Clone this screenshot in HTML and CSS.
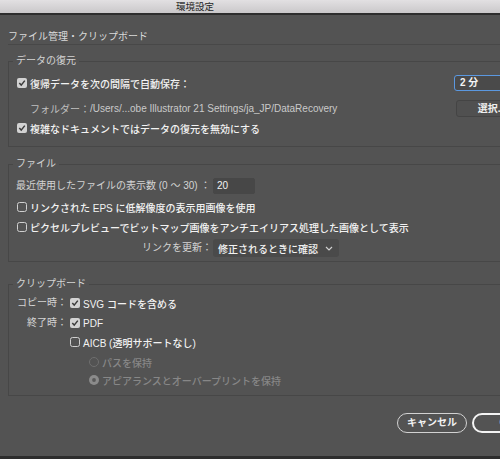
FILE: index.html
```html
<!DOCTYPE html>
<html lang="ja">
<head>
<meta charset="utf-8">
<title>環境設定</title>
<link rel="stylesheet" href="styles.css">
</head>
<body>
<div class="window">
  <div class="titlebar"><span class="title">環境設定</span></div>
  <div class="content">
    <div class="heading">ファイル管理・クリップボード</div>

    <fieldset class="group g1">
      <legend>データの復元</legend>
      <div class="row r1">
        <span class="cb on"><svg viewBox="0 0 10 10"><rect x="0" y="0" width="10" height="10" rx="2" fill="#d2d2d2"/><path d="M2.3 5.1 L4.2 7.1 L7.8 2.6" fill="none" stroke="#3b3b3b" stroke-width="1.5"/></svg></span>
        <span class="lbl">復帰データを次の間隔で自動保存：</span>
        <span class="select focus">2 分</span>
      </div>
      <div class="row r2">
        <span class="folder">フォルダー：</span><span class="path">/Users/...obe Illustrator 21 Settings/ja_JP/DataRecovery</span>
        <span class="btn-choose">選択...</span>
      </div>
      <div class="row r3">
        <span class="cb on"><svg viewBox="0 0 10 10"><rect x="0" y="0" width="10" height="10" rx="2" fill="#d2d2d2"/><path d="M2.3 5.1 L4.2 7.1 L7.8 2.6" fill="none" stroke="#3b3b3b" stroke-width="1.5"/></svg></span>
        <span class="lbl">複雑なドキュメントではデータの復元を無効にする</span>
      </div>
    </fieldset>

    <fieldset class="group g2">
      <legend>ファイル</legend>
      <div class="form2">
        <span class="plain count">最近使用したファイルの表示数 (0 ～ 30) ：</span>
        <span class="input">20</span>
        <div class="row span cb3">
          <span class="cb"><svg viewBox="0 0 10 10"><rect x="0.5" y="0.5" width="9" height="9" rx="2" fill="none" stroke="#cfcfcf"/></svg></span>
          <span class="lbl">リンクされた EPS に低解像度の表示用画像を使用</span>
        </div>
        <div class="row span cb4">
          <span class="cb"><svg viewBox="0 0 10 10"><rect x="0.5" y="0.5" width="9" height="9" rx="2" fill="none" stroke="#cfcfcf"/></svg></span>
          <span class="lbl">ピクセルプレビューでビットマップ画像をアンチエイリアス処理した画像として表示</span>
        </div>
        <span class="plain right link">リンクを更新：</span>
        <span class="dropdown link">修正されるときに確認<svg class="chev" viewBox="0 0 8 5"><path d="M1 1 L4 4 L7 1" fill="none" stroke="#d0d0d0" stroke-width="1.2"/></svg></span>
      </div>
    </fieldset>

    <fieldset class="group g3">
      <legend>クリップボード</legend>
      <div class="form3">
        <span class="plain right c1">コピー時：</span>
        <div class="row c1">
          <span class="cb on"><svg viewBox="0 0 10 10"><rect x="0" y="0" width="10" height="10" rx="2" fill="#d2d2d2"/><path d="M2.3 5.1 L4.2 7.1 L7.8 2.6" fill="none" stroke="#3b3b3b" stroke-width="1.5"/></svg></span>
          <span class="lbl">SVG コードを含める</span>
        </div>
        <span class="plain right c2">終了時：</span>
        <div class="row c2">
          <span class="cb on"><svg viewBox="0 0 10 10"><rect x="0" y="0" width="10" height="10" rx="2" fill="#d2d2d2"/><path d="M2.3 5.1 L4.2 7.1 L7.8 2.6" fill="none" stroke="#3b3b3b" stroke-width="1.5"/></svg></span>
          <span class="lbl">PDF</span>
        </div>
        <div class="row c3 col2">
          <span class="cb"><svg viewBox="0 0 10 10"><rect x="0.5" y="0.5" width="9" height="9" rx="2" fill="none" stroke="#cfcfcf"/></svg></span>
          <span class="lbl">AICB (透明サポートなし)</span>
        </div>
        <div class="row c4 col2 radio">
          <span class="rd"><svg viewBox="0 0 10 10"><circle cx="5" cy="5" r="4.5" fill="none" stroke="#6f6f6f"/></svg></span>
          <span class="dis">パスを保持</span>
        </div>
        <div class="row c5 col2 radio">
          <span class="rd"><svg viewBox="0 0 10 10"><circle cx="5" cy="5" r="5" fill="#8b8b8b"/><circle cx="5" cy="5" r="1.9" fill="#595959"/></svg></span>
          <span class="dis">アピアランスとオーバープリントを保持</span>
        </div>
      </div>
    </fieldset>

    <div class="buttons">
      <span class="btn cancel">キャンセル</span>
      <span class="btn ok">OK</span>
    </div>
  </div>
</div>
</body>
</html>
```

FILE: styles.css
```css
html, body {
  margin: 0;
  padding: 0;
  overflow: hidden;
  background: #535353;
}

body {
  width: 500px;
  height: 459px;
}

.window {
  width: 560px;
  height: 459px;
  box-sizing: border-box;
  border-bottom: 3px solid #2d2d2d;
  background: #535353;
  font-family: "Liberation Sans", "Noto Sans CJK JP", sans-serif;
  font-size: 10px;
  color: #d6d6d6;
}

.titlebar {
  height: 13px;
  border-bottom: 2px solid #2e2e2e;
  background: linear-gradient(#e2e0e2, #cac8ca);
  padding-left: 176px;
  line-height: 13px;
}

.title {
  font-size: 9.5px;
  color: #262626;
}

.content {
  padding: 15px 0 0 8px;
}

.heading {
  line-height: 14px;
  border-bottom: 1px solid #484848;
  color: #dadada;
}

.group {
  margin: 9px 0 0 0;
  padding: 0 8px 9px 8px;
  border: 1px solid #474747;
  min-width: 0;
}

.group legend {
  padding: 0 3px;
  margin-left: -4px;
  line-height: 14px;
  color: #d4d4d4;
}

.g2 {
  margin-top: 10px;
  padding-bottom: 4px;
}

.g3 {
  margin-top: 15px;
  padding-bottom: 6px;
}

.row {
  display: flex;
  align-items: center;
  height: 18px;
}

.cb, .rd {
  display: flex;
  width: 10px;
  height: 10px;
  margin-right: 3px;
  flex: none;
}

.cb svg, .rd svg {
  width: 10px;
  height: 10px;
}

.lbl {
  color: #f2f2f2;
  font-weight: 500;
  white-space: nowrap;
}

.plain {
  color: #d4d4d4;
  white-space: nowrap;
  line-height: 18px;
}

.dis {
  color: #878787;
  font-weight: 500;
  white-space: nowrap;
}

/* group 1 */
.r1 { margin-top: 6px; }
.r2 { margin-top: 7px; }
.r3 { margin-top: 2px; }

.select {
  margin-left: auto;
  margin-right: 17px;
  width: 80px;
  height: 16px;
  box-sizing: border-box;
  border: 1px solid #5b98e0;
  border-radius: 3px;
  background: #4a4a4a;
  padding-left: 5px;
  line-height: 14px;
  color: #f4f4f4;
  font-weight: bold;
}

.folder {
  margin-left: 13px;
  color: #c0c0c0;
}

.path {
  color: #cacaca;
  white-space: nowrap;
}

.btn-choose {
  margin-left: auto;
  margin-right: 23px;
  width: 72px;
  height: 17px;
  box-sizing: border-box;
  border: 1px solid #444;
  border-radius: 3px;
  background: #505050;
  text-align: center;
  line-height: 15px;
  color: #efefef;
  font-weight: bold;
}

/* group 2 */
.form2 {
  display: grid;
  grid-template-columns: 195px auto;
  column-gap: 1px;
  justify-content: start;
  align-items: center;
}

.form2 .span {
  grid-column: 1 / 3;
}

.count {
  margin-top: 6px;
  margin-left: -1px;
}

.form2 .input {
  margin-top: 6px;
  width: 42px;
  height: 16px;
  box-sizing: border-box;
  border: 1px solid #474747;
  border-radius: 2px;
  background: #474747;
  padding-left: 3px;
  line-height: 14px;
  color: #f2f2f2;
  font-weight: 500;
}

.cb3 { margin-top: 3px; }
.cb4 { margin-top: 2px; }

.right {
  justify-self: end;
}

.link {
  margin-top: 3px;
}

.dropdown {
  display: flex;
  align-items: center;
  width: 126px;
  height: 18px;
  box-sizing: border-box;
  border-radius: 3px;
  background: #4a4a4a;
  padding-left: 5px;
  color: #f2f2f2;
  font-weight: 500;
  white-space: nowrap;
}

.chev {
  width: 8px;
  height: 5px;
  margin-left: auto;
  margin-right: 6px;
}

/* group 3 */
.form3 {
  display: grid;
  grid-template-columns: 50px auto;
  column-gap: 3px;
  justify-content: start;
  align-items: center;
}

.form3 .col2 {
  grid-column: 2;
}

.c1 { margin-top: 3px; }
.c2 { margin-top: 2px; }
.c3 { margin-top: 1px; }
.c4 { margin-top: 2px; }
.c5 { margin-top: 0; }

.radio {
  padding-left: 19px;
}

/* buttons */
.buttons {
  display: flex;
  justify-content: flex-end;
  gap: 5px;
  margin-top: 17px;
  padding-right: 18px;
}

.btn {
  height: 20px;
  box-sizing: border-box;
  border-radius: 10px;
  text-align: center;
  color: #f2f2f2;
  font-weight: bold;
}

.cancel {
  width: 70px;
  border: 1.5px solid #d2d2d2;
  line-height: 17px;
}

.ok {
  width: 70px;
  border: 2px solid #f4f4f4;
  line-height: 16px;
}
```
